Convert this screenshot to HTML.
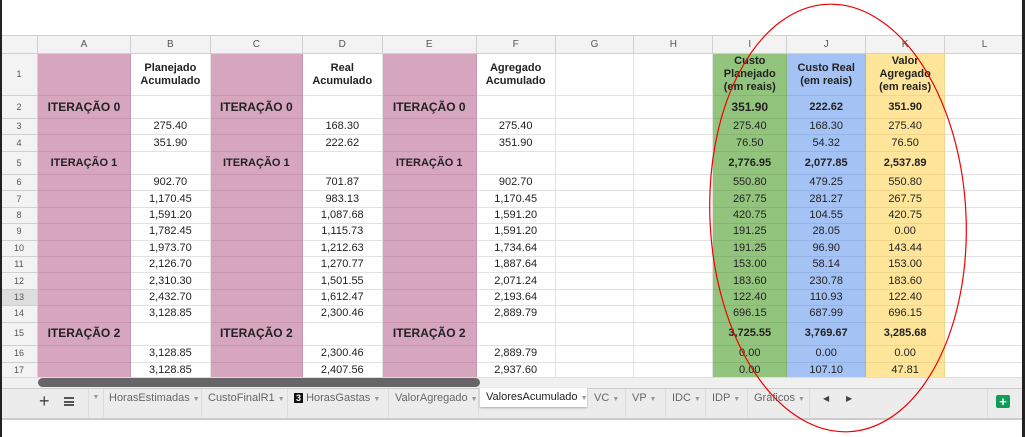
<!DOCTYPE html><html><head><style>
body{margin:0;width:1025px;height:437px;overflow:hidden;background:#fff;font-family:"Liberation Sans",Arial,sans-serif;position:relative}
table{position:absolute;left:0;top:35px;border-collapse:collapse;table-layout:fixed;font-size:11px;color:#222}
td{border:1px solid #e2e2e2;padding:0;text-align:center;overflow:hidden;white-space:nowrap;line-height:13px}
tr.h td{background:#f3f3f3;color:#555;font-size:10px;border-color:#d0d0d0}
td.n{background:#f3f3f3;color:#555;font-size:9px;border-color:#d0d0d0}
.p{background:#d5a6bd;border-color:#c996ae}.g{background:#93c47d;border-color:#85b56f}.b{background:#a4c2f4;border-color:#94b3e6}.y{background:#ffe599;border-color:#f0d58a}
.B{font-weight:bold}.L{font-size:12px;font-weight:bold}
.t{position:absolute;top:0;height:28px;line-height:18px;padding-left:6px;border-right:1px solid #ddd;white-space:nowrap;box-sizing:border-box}
.t i{font-style:normal;font-size:7px;color:#999}
</style></head><body>
<table>
<colgroup><col style="width:37px"><col style="width:93px"><col style="width:80px"><col style="width:92px"><col style="width:80px"><col style="width:94px"><col style="width:79px"><col style="width:79px"><col style="width:79px"><col style="width:74px"><col style="width:79px"><col style="width:79px"><col style="width:80px"></colgroup>
<tr class="h" style="height:18px"><td></td><td>A</td><td>B</td><td>C</td><td>D</td><td>E</td><td>F</td><td>G</td><td>H</td><td>I</td><td>J</td><td>K</td><td>L</td></tr>
<tr style="height:42px"><td class="n">1</td><td class="p"></td><td class="B">Planejado<br>Acumulado</td><td class="p"></td><td class="B">Real<br>Acumulado</td><td class="p"></td><td class="B">Agregado<br>Acumulado</td><td></td><td></td><td class="g B">Custo<br>Planejado<br>(em reais)</td><td class="b B">Custo Real<br>(em reais)</td><td class="y B">Valor<br>Agregado<br>(em reais)</td><td></td></tr>
<tr style="height:23px"><td class="n">2</td><td class="p L">ITERAÇÃO 0</td><td></td><td class="p L">ITERAÇÃO 0</td><td></td><td class="p L">ITERAÇÃO 0</td><td></td><td></td><td></td><td class="g L">351.90</td><td class="b B">222.62</td><td class="y B">351.90</td><td></td></tr>
<tr style="height:16px"><td class="n">3</td><td class="p"></td><td>275.40</td><td class="p"></td><td>168.30</td><td class="p"></td><td>275.40</td><td></td><td></td><td class="g">275.40</td><td class="b">168.30</td><td class="y">275.40</td><td></td></tr>
<tr style="height:17px"><td class="n">4</td><td class="p"></td><td>351.90</td><td class="p"></td><td>222.62</td><td class="p"></td><td>351.90</td><td></td><td></td><td class="g">76.50</td><td class="b">54.32</td><td class="y">76.50</td><td></td></tr>
<tr style="height:23px"><td class="n">5</td><td class="p B">ITERAÇÃO 1</td><td></td><td class="p B">ITERAÇÃO 1</td><td></td><td class="p B">ITERAÇÃO 1</td><td></td><td></td><td></td><td class="g B">2,776.95</td><td class="b B">2,077.85</td><td class="y B">2,537.89</td><td></td></tr>
<tr style="height:16.4px"><td class="n">6</td><td class="p"></td><td>902.70</td><td class="p"></td><td>701.87</td><td class="p"></td><td>902.70</td><td></td><td></td><td class="g">550.80</td><td class="b">479.25</td><td class="y">550.80</td><td></td></tr>
<tr style="height:16.4px"><td class="n">7</td><td class="p"></td><td>1,170.45</td><td class="p"></td><td>983.13</td><td class="p"></td><td>1,170.45</td><td></td><td></td><td class="g">267.75</td><td class="b">281.27</td><td class="y">267.75</td><td></td></tr>
<tr style="height:16.4px"><td class="n">8</td><td class="p"></td><td>1,591.20</td><td class="p"></td><td>1,087.68</td><td class="p"></td><td>1,591.20</td><td></td><td></td><td class="g">420.75</td><td class="b">104.55</td><td class="y">420.75</td><td></td></tr>
<tr style="height:16.4px"><td class="n">9</td><td class="p"></td><td>1,782.45</td><td class="p"></td><td>1,115.73</td><td class="p"></td><td>1,591.20</td><td></td><td></td><td class="g">191.25</td><td class="b">28.05</td><td class="y">0.00</td><td></td></tr>
<tr style="height:16.4px"><td class="n">10</td><td class="p"></td><td>1,973.70</td><td class="p"></td><td>1,212.63</td><td class="p"></td><td>1,734.64</td><td></td><td></td><td class="g">191.25</td><td class="b">96.90</td><td class="y">143.44</td><td></td></tr>
<tr style="height:16.4px"><td class="n">11</td><td class="p"></td><td>2,126.70</td><td class="p"></td><td>1,270.77</td><td class="p"></td><td>1,887.64</td><td></td><td></td><td class="g">153.00</td><td class="b">58.14</td><td class="y">153.00</td><td></td></tr>
<tr style="height:16.4px"><td class="n">12</td><td class="p"></td><td>2,310.30</td><td class="p"></td><td>1,501.55</td><td class="p"></td><td>2,071.24</td><td></td><td></td><td class="g">183.60</td><td class="b">230.78</td><td class="y">183.60</td><td></td></tr>
<tr style="height:16.4px"><td class="n" style="background:#ddd">13</td><td class="p"></td><td>2,432.70</td><td class="p"></td><td>1,612.47</td><td class="p"></td><td>2,193.64</td><td></td><td></td><td class="g">122.40</td><td class="b">110.93</td><td class="y">122.40</td><td></td></tr>
<tr style="height:16.4px"><td class="n">14</td><td class="p"></td><td>3,128.85</td><td class="p"></td><td>2,300.46</td><td class="p"></td><td>2,889.79</td><td></td><td></td><td class="g">696.15</td><td class="b">687.99</td><td class="y">696.15</td><td></td></tr>
<tr style="height:23px"><td class="n">15</td><td class="p L">ITERAÇÃO 2</td><td></td><td class="p L">ITERAÇÃO 2</td><td></td><td class="p L">ITERAÇÃO 2</td><td></td><td></td><td></td><td class="g B">3,725.55</td><td class="b B">3,769.67</td><td class="y B">3,285.68</td><td></td></tr>
<tr style="height:17px"><td class="n">16</td><td class="p"></td><td>3,128.85</td><td class="p"></td><td>2,300.46</td><td class="p"></td><td>2,889.79</td><td></td><td></td><td class="g">0.00</td><td class="b">0.00</td><td class="y">0.00</td><td></td></tr>
<tr style="height:17px"><td class="n">17</td><td class="p"></td><td>3,128.85</td><td class="p"></td><td>2,407.56</td><td class="p"></td><td>2,937.60</td><td></td><td></td><td class="g">0.00</td><td class="b">107.10</td><td class="y">47.81</td><td></td></tr>
</table>
<div style="position:absolute;left:0;top:377px;width:1025px;height:11px;background:#f0f0f0;border-top:1px solid #ddd"></div>
<div style="position:absolute;left:38px;top:378px;width:442px;height:9px;background:#666;border-radius:5px"></div>
<div style="position:absolute;left:0;top:388px;width:1025px;height:29px;background:#ececec;border-top:1px solid #ccc;border-bottom:2px solid #ccc"></div>
<div style="position:absolute;left:0;top:389px;width:1025px;height:28px;font-size:11px;color:#666">
<span style="position:absolute;left:39px;top:2px;font-size:18px;color:#444">+</span>
<span style="position:absolute;left:64px;top:8px;width:10px;height:9px;border-top:2px solid #555;border-bottom:2px solid #555;box-sizing:border-box"></span><span style="position:absolute;left:64px;top:12px;width:10px;height:2px;background:#555"></span>
<span style="position:absolute;left:88px;top:0;width:14px;height:28px;border-left:1px solid #ddd;border-right:1px solid #ddd;color:#999;font-size:7px;line-height:18px;text-align:center">▼</span>
<span class="t" style="left:103px;width:99px">HorasEstimadas <i>▼</i></span>
<span class="t" style="left:202px;width:86px">CustoFinalR1 <i>▼</i></span>
<span class="t" style="left:288px;width:101px"><b style="background:#111;color:#fff;font-size:9px;padding:0 2px">3</b> HorasGastas <i>▼</i></span>
<span class="t" style="left:389px;width:90px">ValorAgregado <i>▼</i></span>
<span class="t" style="left:480px;width:107px;top:-1px;height:19px;line-height:18px;background:#fff;color:#222;box-shadow:0 1px 2px #aaa;border:none">ValoresAcumulado <i>▼</i></span>
<span class="t" style="left:588px;width:38px">VC <i>▼</i></span>
<span class="t" style="left:626px;width:40px">VP <i>▼</i></span>
<span class="t" style="left:666px;width:40px">IDC <i>▼</i></span>
<span class="t" style="left:706px;width:42px">IDP <i>▼</i></span>
<span class="t" style="left:748px;width:62px">Gráficos <i>▼</i></span>
<span style="position:absolute;left:823px;top:5px;font-size:8px;color:#444">◀</span><span style="position:absolute;left:846px;top:5px;font-size:8px;color:#444">▶</span>
<span style="position:absolute;left:987px;top:0;width:1px;height:28px;background:#ddd"></span>
<span style="position:absolute;left:996px;top:6px;width:14px;height:13px;background:#0f9d58;border-radius:2px;color:#fff;font-weight:bold;font-size:13px;line-height:13px;text-align:center">+</span>
</div>
<div style="position:absolute;left:0;top:0;width:2px;height:437px;background:#222"></div>
<div style="position:absolute;left:1022px;top:0;width:3px;height:437px;background:#222"></div>
<svg style="position:absolute;left:0;top:0" width="1025" height="437"><ellipse cx="838" cy="218" rx="128" ry="214" fill="none" stroke="#e00" stroke-width="1.2" transform="rotate(-3 838 218)"/></svg>
</body></html>
